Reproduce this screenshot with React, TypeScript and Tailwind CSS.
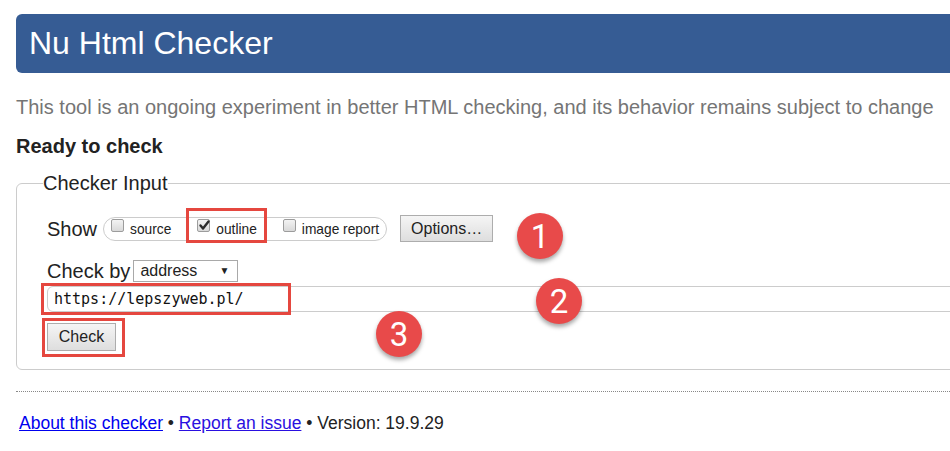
import { ReactNode } from 'react'

function Box({ checked }: { checked?: boolean }) {
  return (
    <span className="relative mb-[6px] w-[13px] h-[13px] shrink-0 rounded-[2px] border border-[#9c9c9c] bg-gradient-to-b from-[#f3f3f3] to-[#d9d9d9]">
      {checked && (
        <svg viewBox="0 0 13 13" className="absolute left-[0px] top-[-1px] w-[13px] h-[13px]">
          <path d="M2.5 6.5 L5 9.5 L10.5 2.5" fill="none" stroke="#2b2b2b" strokeWidth="2.4" strokeLinecap="round" strokeLinejoin="round" />
        </svg>
      )}
    </span>
  )
}

function Option({ label, checked, first }: { label: string; checked?: boolean; first?: boolean }) {
  return (
    <label className={`flex items-center ${first ? '' : 'ml-[26px]'}`}>
      <Box checked={checked} />
      <span className="ml-[6px] mt-[2px] text-[13.75px] leading-[16px]">{label}</span>
    </label>
  )
}

function Marker({ n, className }: { n: number; className: string }) {
  return (
    <div className={`absolute w-[46px] h-[46px] rounded-full bg-[#e84a4a] shadow-[0_3px_4px_rgba(0,0,0,0.35)] flex items-center justify-center text-white font-['Roboto',sans-serif] font-normal text-[33px] leading-none ${className}`}>
      {n}
    </div>
  )
}

function Frame({ className }: { className: string; children?: ReactNode }) {
  return <div className={`absolute border-[3px] border-[#e5473f] ${className}`} />
}

export default function App() {
  return (
    <div className="relative w-[950px] h-[451px] overflow-hidden bg-white text-[#222] font-['Liberation_Sans',Arial,sans-serif]">
      <div className="w-[1010px] pl-4 pt-[14px]">
        {/* Header */}
        <div className="h-[59px] rounded-[6px] bg-[#365c94] flex items-center pl-[13px]">
          <h1 className="text-white text-[32px] leading-[37px]">Nu Html Checker</h1>
        </div>

        <p className="mt-[22px] text-[20px] leading-[24px] text-[#757575]">
          This tool is an ongoing experiment in better HTML checking, and its behavior remains subject to change
        </p>

        <p className="mt-[15px] text-[20px] leading-[24px] font-bold">Ready to check</p>

        {/* Checker input */}
        <fieldset className="mt-[13px] border border-[#ccc] rounded-[6px] pl-[30px] pr-[20px] pb-[18px]">
          <legend className="-ml-[4px] text-[20px] leading-[24px]">Checker Input</legend>

          <div className="mt-[20px] h-[27px] flex items-center">
            <span className="text-[20px] leading-[24px]">Show</span>
            <div className="ml-[6px] h-[24px] rounded-full border border-[#ccc] flex items-center px-[7px]">
              <Option label="source" first />
              <Option label="outline" checked />
              <Option label="image report" />
            </div>
            <button className="ml-[13px] h-[27px] px-[10px] border border-[#adadad] bg-gradient-to-b from-[#f5f5f5] to-[#dedede] text-[16px] leading-[20px]">
              Options…
            </button>
          </div>

          <div className="mt-[18px] h-[22px] flex items-center">
            <span className="text-[20px] leading-[22px]">Check by</span>
            <div className="ml-[3px] w-[105px] h-[22px] border border-[#a9a9a9] flex items-center justify-between pl-[6px] pr-[8px] text-[16px] leading-[20px]">
              <span>address</span>
              <span className="text-[10px] leading-none">▼</span>
            </div>
          </div>

          <div className="mt-[4px] h-[26px] border border-[#ccc] rounded-[6px] pl-[6px] flex items-center font-['DejaVu_Sans_Mono',monospace] text-[15px] text-[#111]">
            https://lepszyweb.pl/
          </div>

          <button className="mt-[11px] w-[69px] h-[28px] border border-[#adadad] bg-gradient-to-b from-[#f5f5f5] to-[#dedede] text-[16px] leading-[20px]">
            Check
          </button>
        </fieldset>

        <div className="mt-[21px] border-t border-dotted border-[#888]" />

        <div className="mt-[21px] pl-[3px] text-[17.5px] leading-[20px]">
          <a href="#" className="text-[#0000ee] underline">About this checker</a>
          {' • '}
          <a href="#" className="text-[#2a0fe0] underline">Report an issue</a>
          {' • Version: 19.9.29'}
        </div>
      </div>

      {/* Annotations */}
      <Frame className="left-[186px] top-[208px] w-[81px] h-[35px]" />
      <Frame className="left-[41px] top-[283px] w-[250px] h-[32px]" />
      <Frame className="left-[42px] top-[318px] w-[83px] h-[39px]" />
      <Marker n={1} className="left-[517px] top-[213px]" />
      <Marker n={2} className="left-[536px] top-[278px]" />
      <Marker n={3} className="left-[376px] top-[311px]" />
    </div>
  )
}
